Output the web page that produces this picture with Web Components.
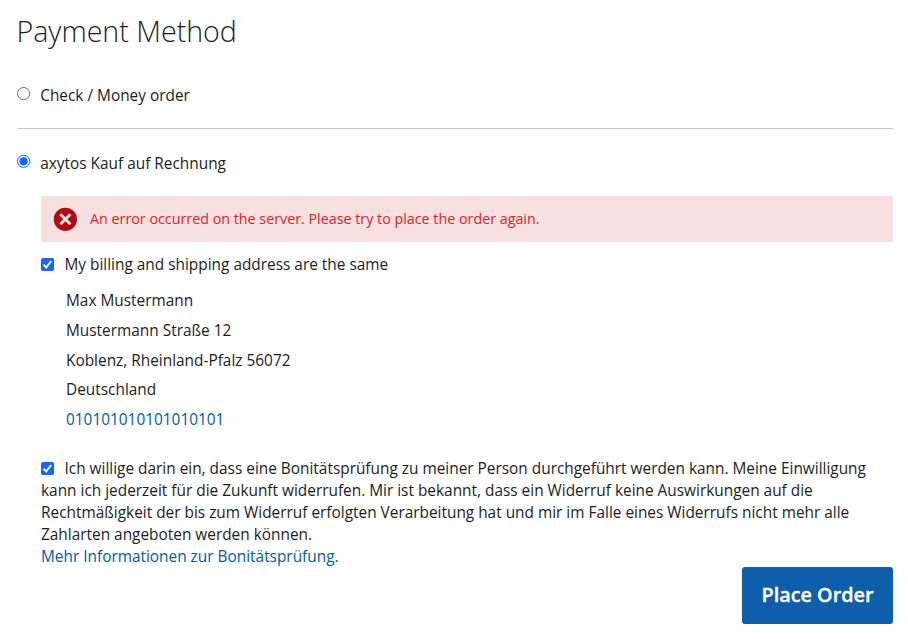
<!DOCTYPE html>
<html lang="de"><head><meta charset="utf-8"><title>Payment Method</title>
<style>body{margin:0;background:#fff;color:#1d1d1d;font:15.4px/22px "Open Sans","Noto Sans",sans-serif}</style></head>
<body><payment-page></payment-page>
<script>
const define=(name,html)=>customElements.define(name,class extends HTMLElement{constructor(){super();this.attachShadow({mode:'open'}).innerHTML=html;}});
define('radio-mark',`<style>:host{display:block;width:13px;height:13px;flex:none}svg{display:block;overflow:visible}.on{display:none}:host([checked]) .on{display:block}:host([checked]) .off{display:none}</style>
<svg class="off" width="13" height="13"><circle cx="6.6" cy="6.6" r="6.1" fill="#fff" stroke="#6c6c6c"/></svg>
<svg class="on" width="13" height="13"><circle cx="6.6" cy="6.3" r="6.1" fill="#fff" stroke="#0f68ff"/><circle cx="6.6" cy="6.3" r="4.1" fill="#0f68ff"/></svg>`);
define('check-mark',`<style>:host{display:inline-block;width:13px;height:13px;flex:none}svg{display:block}</style>
<svg width="13" height="13"><rect width="13" height="13" rx="2" fill="#0f68ff"/><path d="M2.7 6.8 5.2 9.5 10.2 3" fill="none" stroke="#fff" stroke-width="2"/></svg>`);
customElements.define('method-option',class extends HTMLElement{constructor(){super();this.attachShadow({mode:'open'}).innerHTML=`<style>:host{display:flex;gap:10.2px;height:22px}radio-mark{margin-top:2px}</style><radio-mark ${this.hasAttribute('checked')?'checked':''}></radio-mark><span><slot></slot></span>`;}});
define('error-message',`<style>:host{display:flex;align-items:center;box-sizing:border-box;height:46px;padding-left:12px;gap:13px;background:#f9e0e0;color:#dc2327;font-size:14.3px}svg{flex:none;overflow:visible}</style>
<svg width="24" height="24"><circle cx="12.4" cy="12.3" r="11.6" fill="#ad0e12"/><path d="M7.4 7.3 17.4 17.3M17.4 7.3 7.4 17.3" stroke="#f9e0e0" stroke-width="2.8"/></svg><span><slot></slot></span>`);
define('billing-address',`<style>:host{display:block;line-height:29.75px;padding-left:25px}div{white-space:nowrap}a{color:#005ca8}</style>
<div>Max Mustermann</div><div>Mustermann Straße 12</div><div>Koblenz, Rheinland-Pfalz 56072</div><div>Deutschland</div><div><a>010101010101010101</a></div>`);
define('place-order',`<style>:host{display:block}button{display:block;width:151px;height:57px;border:0;border-radius:3px;background:#0d5fab;color:#fff;-webkit-text-stroke:.35px #fff;font:600 19.8px/26px "Open Sans",sans-serif;padding:0;white-space:nowrap}</style><button><slot></slot></button>`);
define('credit-consent',`<style>:host{display:block;white-space:nowrap}check-mark{vertical-align:-1px;margin-right:10.5px}a{color:#005ca8}</style>
<check-mark></check-mark><span>Ich willige darin ein, dass eine Bonitätsprüfung zu meiner Person durchgeführt werden kann. Meine Einwilligung</span><br><span>kann ich jederzeit für die Zukunft widerrufen. Mir ist bekannt, dass ein Widerruf keine Auswirkungen auf die</span><br><span>Rechtmäßigkeit der bis zum Widerruf erfolgten Verarbeitung hat und mir im Falle eines Widerrufs nicht mehr alle</span><br><span>Zahlarten angeboten werden können.</span><br><a>Mehr Informationen zur Bonitätsprüfung.</a>`);
define('payment-page',`<style>:host{display:block;box-sizing:border-box;height:639px;padding:11px 15px 0 17px;overflow:hidden}h1{margin:0 0 0 -.6px;font-size:28.6px;line-height:40px;font-weight:300}
method-option{margin-top:34px}hr{border:0;height:1px;background:#c5c5c5;margin:21px 0 0}method-option.b{margin-top:24px}.body{padding-left:24px;margin-top:21px}.same{display:flex;align-items:flex-start;gap:10.5px;margin:12px 0 10px}.same check-mark{margin-top:4px}place-order{width:151px;margin:-1px 0 0 auto}credit-consent{margin-top:23px}</style>
<h1>Payment Method</h1><method-option>Check / Money order</method-option><hr><method-option class="b" checked>axytos Kauf auf Rechnung</method-option>
<div class="body"><error-message>An error occurred on the server. Please try to place the order again.</error-message><div class="same"><check-mark></check-mark><span>My billing and shipping address are the same</span></div><billing-address></billing-address><credit-consent></credit-consent></div><place-order>Place Order</place-order>`);
</script></body></html>
